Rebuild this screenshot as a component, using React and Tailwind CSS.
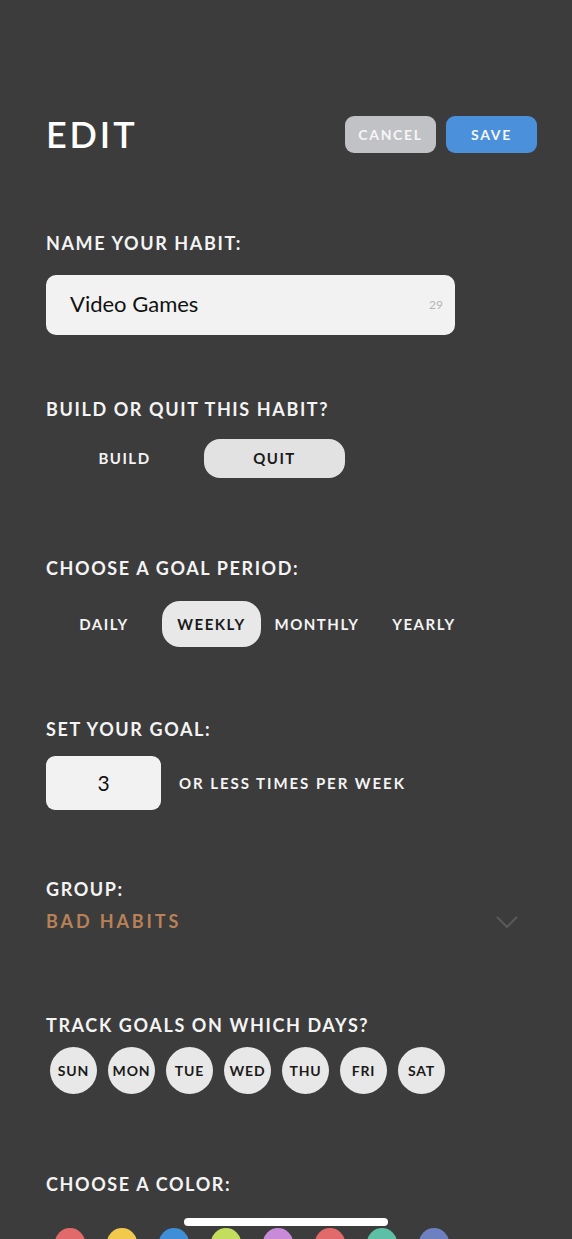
import React from 'react';

const font = { fontFamily: 'Lato, "Open Sans", sans-serif' };

const periods = [
  { name: 'DAILY', w: 'w-[116px]' },
  { name: 'WEEKLY', w: 'w-[99px]' },
  { name: 'MONTHLY', w: 'w-[112px]' },
  { name: 'YEARLY', w: 'w-[102px]' },
];
const days = ['SUN', 'MON', 'TUE', 'WED', 'THU', 'FRI', 'SAT'];
const colors = ['#e26a6a', '#f2c94c', '#3f8fd8', '#c3dd5c', '#c98ad9', '#e26a6a', '#5cbfa6', '#6d80bf'];

function Label({ children }) {
  return (
    <p className="text-[18px] leading-[24px] font-bold tracking-[0.09em] text-[#f4f4f4]">{children}</p>
  );
}

export default function App() {
  return (
    <div className="relative h-[1239px] w-[572px] overflow-hidden bg-[#3c3c3c]" style={font}>
      <div className="px-[46px] pt-[116px]">
        {/* header */}
        <div className="flex items-center justify-between">
          <h1 className="text-[36px] leading-[37px] font-semibold tracking-[0.08em] text-white">EDIT</h1>
          <div className="flex gap-[10px] -mr-[11px]">
            <button className="h-[37px] w-[91px] rounded-[9px] bg-[#c1c2c5] text-[14px] font-bold tracking-[0.12em] text-[#f6f6f6]">
              CANCEL
            </button>
            <button className="h-[37px] w-[91px] rounded-[9px] bg-[#4a90db] text-[14px] font-bold tracking-[0.12em] text-[#f6f6f6]">
              SAVE
            </button>
          </div>
        </div>

        {/* name */}
        <div className="mt-[78px]">
          <Label>NAME YOUR HABIT:</Label>
          <div className="mt-[20px] flex h-[60px] w-[409px] items-center justify-between rounded-[10px] bg-[#f2f2f2] pl-[24px] pr-[12px]">
            <span className="-mt-[4px] text-[22px] text-[#111]">Video Games</span>
            <span className="text-[12px] text-[#b5b5b5]">29</span>
          </div>
        </div>

        {/* build or quit */}
        <div className="mt-[62px]">
          <Label>BUILD OR QUIT THIS HABIT?</Label>
          <div className="mt-[18px] flex items-center">
            <div className="flex h-[39px] w-[141px] items-center justify-center pl-[16px] text-[15px] font-bold tracking-[0.1em] text-[#f4f4f4]">
              BUILD
            </div>
            <div className="ml-[17px] flex h-[39px] w-[141px] items-center justify-center rounded-[16px] bg-[#e2e2e2] text-[15px] font-bold tracking-[0.1em] text-[#1a1a1a]">
              QUIT
            </div>
          </div>
        </div>

        {/* goal period */}
        <div className="mt-[78px]">
          <Label>CHOOSE A GOAL PERIOD:</Label>
          <div className="mt-[21px] flex h-[46px] items-center">
            {periods.map((p) => (
              <div
                key={p.name}
                className={
                  p.name === 'WEEKLY'
                    ? `flex h-[46px] ${p.w} items-center justify-center rounded-[18px] bg-[#e8e8e8] text-[15px] font-bold tracking-[0.1em] text-[#1a1a1a]`
                    : `flex h-[46px] ${p.w} items-center justify-center text-[15px] font-bold tracking-[0.1em] text-[#f4f4f4]`
                }
              >
                {p.name}
              </div>
            ))}
          </div>
        </div>

        {/* goal */}
        <div className="mt-[70px]">
          <Label>SET YOUR GOAL:</Label>
          <div className="mt-[15px] flex items-center">
            <div className="flex h-[54px] w-[115px] items-center justify-center rounded-[9px] bg-[#f2f2f2] text-[21px] text-[#111]">
              3
            </div>
            <span className="ml-[18px] text-[15px] font-bold tracking-[0.13em] text-[#f4f4f4]">OR LESS TIMES PER WEEK</span>
          </div>
        </div>

        {/* group */}
        <div className="mt-[67px]">
          <Label>GROUP:</Label>
          <div className="mt-[7px] flex items-center justify-between pr-[7px]">
            <span className="text-[18px] font-bold tracking-[0.16em] text-[#b98157]">BAD HABITS</span>
            <svg width="24" height="14" viewBox="0 0 24 14" fill="none" stroke="#595959" strokeWidth="2.2">
              <path d="M2 2l10 10L22 2" />
            </svg>
          </div>
        </div>

        {/* days */}
        <div className="mt-[78px]">
          <Label>TRACK GOALS ON WHICH DAYS?</Label>
          <div className="mt-[10px] flex gap-[11px] pl-[4px]">
            {days.map((d) => (
              <div
                key={d}
                className="flex h-[47px] w-[47px] items-center justify-center rounded-full bg-[#e8e8e8] text-[14px] font-bold tracking-[0.06em] text-[#1a1a1a]"
              >
                {d}
              </div>
            ))}
          </div>
        </div>

        {/* color */}
        <div className="mt-[78px]">
          <Label>CHOOSE A COLOR:</Label>
          <div className="mt-[32px] flex gap-[22px] pl-[9px]">
            {colors.map((c, i) => (
              <div key={i} className="h-[30px] w-[30px] rounded-full" style={{ backgroundColor: c }} />
            ))}
          </div>
        </div>
      </div>

      {/* home indicator */}
      <div className="absolute left-[184px] top-[1218px] h-[8px] w-[204px] rounded-full bg-white" />
    </div>
  );
}
